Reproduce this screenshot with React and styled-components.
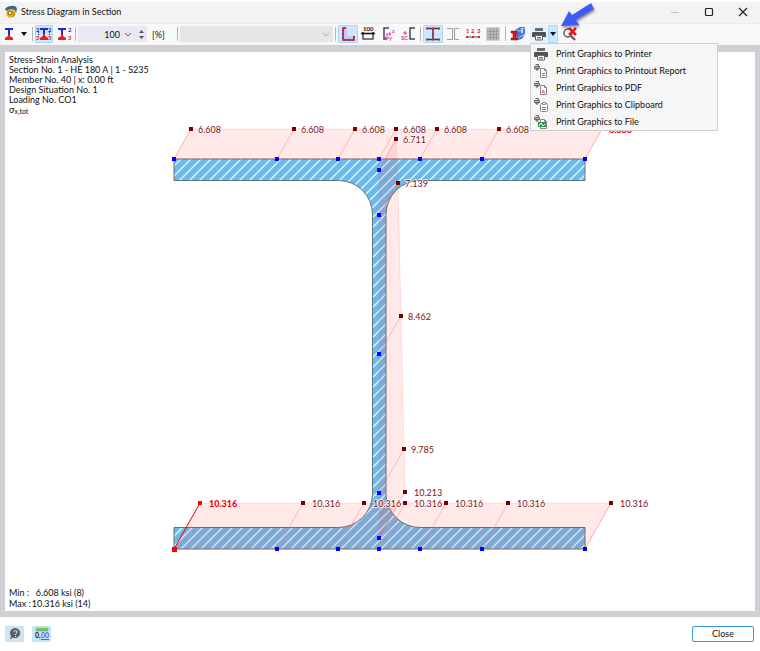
import React, { useState } from 'react';
import styled, { createGlobalStyle } from 'styled-components';

const TOP_X = [174, 277, 338, 379, 420, 482, 585];

const topPoints = TOP_X.map((x, i) => ({
  base: [x, 159],
  tip: [x + 17, 129],
  value: '6.608',
  extreme: i === TOP_X.length - 1,
}));
const bottomPoints = TOP_X.map((x, i) => ({
  base: [x, 549],
  tip: [x + 26, 503],
  value: '10.316',
  extreme: i === 0,
  governing: i === 0,
}));
const webPoints = [
  { base: [379, 170], tip: [396, 139], value: '6.711' },
  { base: [379, 215], tip: [398, 183], value: '7.139' },
  { base: [379, 354], tip: [401, 316], value: '8.462' },
  { base: [379, 493], tip: [404, 449], value: '9.785' },
  { base: [379, 538], tip: [405, 492], value: '10.213' },
];

const SECTION_PATH =
  'M174 159H585V180.500H420A34 34 0 0 0 386 214.500V493.500A34 34 0 0 0 420 527.500H585V549H174V527.500H338.500A34 34 0 0 0 372.500 493.500V214.500A34 34 0 0 0 338.500 180.500H174Z';

const polygon = (points) =>
  [...points.map((p) => p.base), ...[...points].reverse().map((p) => p.tip)]
    .map((p) => p.join(','))
    .join(' ');

function Marker({ at, color, size = 4 }) {
  return (
    <rect
      x={at[0] - size / 2}
      y={at[1] - size / 2}
      width={size}
      height={size}
      fill={color}
      shapeRendering="crispEdges"
    />
  );
}

function StressDiagram() {
  const sets = [topPoints, webPoints, bottomPoints];
  const all = sets.flat();

  return (
    <Diagram viewBox="5 52 750 559" role="img" aria-label="Stress diagram of section HE 180 A">
      <defs>
        <pattern id="hatch" width="10" height="10" patternUnits="userSpaceOnUse">
          <path d="M-1 11L11 -1M-1 1L1 -1M9 11L11 9" stroke="#e6f3fc" strokeWidth="1.4" />
        </pattern>
      </defs>
      <path d={SECTION_PATH} fill="#6abbec" />
      <path d={SECTION_PATH} fill="url(#hatch)" stroke="#66727b" />
      {sets.map((points) => (
        <polygon
          key={points[0].value}
          points={polygon(points)}
          fill="#ff2828"
          fillOpacity="0.1"
          stroke="#ff5050"
          strokeOpacity="0.15"
        />
      ))}
      {all.map((p) => (
        <line
          key={p.base.join()}
          x1={p.base[0]}
          y1={p.base[1]}
          x2={p.tip[0]}
          y2={p.tip[1]}
          stroke={p.governing ? '#ff0000' : '#ff6e6e'}
          strokeOpacity={p.governing ? 1 : 0.4}
        />
      ))}
      {all.map((p) => (
        <g key={p.base.join()}>
          <Marker at={p.base} color={p.governing ? '#ff0000' : '#0000ff'} size={p.governing ? 5 : 4} />
          <Marker at={p.tip} color={p.governing ? '#ff0000' : '#7a0000'} />
          <Value
            x={p.tip[0] + (p.value.length > 5 ? 9 : 7)}
            y={p.tip[1] + 4}
            $extreme={p.extreme}
          >
            {p.value}
          </Value>
        </g>
      ))}
    </Diagram>
  );
}

/* ---- icons ---- */

const AppIcon = () => (
  <svg width="14" height="14" viewBox="0 0 14 14">
    <path d="M3 5L8 3L12 6L10 12L5 13L2 10Z" fill="#f0b92b" />
    <path d="M1 4Q3 1 7 1Q12 0 13 4L12 8L11 5Q9 4 6 4L2 6Z" fill="#3f6680" />
    <circle cx="6" cy="8" r="2" fill="#fff0a8" stroke="#74571a" />
    <path d="M9 7L11 9L8 12" fill="none" stroke="#9a6c11" />
  </svg>
);

const StressIcon = () => (
  <svg width="12" height="14" viewBox="0 0 12 14">
    <path d="M2 1H10V3H7V8H5V3H2Z" fill="#1c2bd8" />
    <path d="M5 8H7V9L10 11V13H2V11L5 9Z" fill="#ee1c25" />
  </svg>
);

const StressValuesIcon = ({ both }) => (
  <svg width="18" height="16" viewBox="0 0 18 16">
    <path d={both ? 'M5 2H13V4H10V8H8V4H5Z' : 'M3 2H11V4H8V8H6V4H3Z'} fill="#1c2bd8" />
    <path
      d={both ? 'M8 8H10V10L13 12V14H5V12L8 10Z' : 'M6 8H8V10L11 12V14H3V12L6 10Z'}
      fill="#ee1c25"
    />
    {both && <path d="M3.500 6V9M14.500 6V9" stroke="#1c2bd8" strokeDasharray="1 1" />}
    {both && <IconText x="1" y="6" fill="#1c2bd8">2</IconText>}
    {both && <IconText x="1" y="14" fill="#ee1c25">3</IconText>}
    <IconText x="13" y="6" fill="#1c2bd8">2</IconText>
    <IconText x="13" y="14" fill="#ee1c25">3</IconText>
  </svg>
);

const CaretIcon = () => (
  <svg width="6" height="4" viewBox="0 0 6 4">
    <path d="M0 0H6L3 4Z" fill="#111" />
  </svg>
);

const ChevronIcon = ({ color = '#666' }) => (
  <svg width="8" height="5" viewBox="0 0 8 5">
    <path d="M1 1L4 4L7 1" fill="none" stroke={color} />
  </svg>
);

const PartIcon = () => (
  <svg width="16" height="16" viewBox="0 0 16 16">
    <path d="M3 2V14H14V10H8Q7 10 7 8V2Z" fill="#c6c5f5" />
    <path d="M6 2H3V14H14V11" fill="none" stroke="#3a4668" strokeWidth="1.500" />
    <path d="M6 2H3V14H14V10" fill="none" stroke="#f0141e" strokeWidth="2" strokeDasharray="2 2" />
  </svg>
);

const DimensionIcon = () => (
  <svg width="16" height="16" viewBox="0 0 16 16">
    <IconText x="3" y="5" fill="#111">100</IconText>
    <path d="M1 7.500H15M3 6V9M13 6V9" stroke="#111" strokeWidth="1.500" />
    <path d="M3 9V13H13V9" fill="none" stroke="#47546b" strokeWidth="1.500" />
  </svg>
);

const AxesIcon = () => (
  <svg width="16" height="16" viewBox="0 0 16 16">
    <path d="M9 2H4V13H7" fill="none" stroke="#3b4668" strokeWidth="1.500" />
    <path d="M6 8H11M7 8V12M10 6V10M5 11L7 13L9 11" fill="none" stroke="#e0409b" />
    <IconText x="12" y="7" fill="#e0409b">z</IconText>
    <IconText x="9" y="14" fill="#e0409b">y</IconText>
  </svg>
);

const ShearCenterIcon = () => (
  <svg width="16" height="16" viewBox="0 0 16 16">
    <path d="M15 2H10V13H15" fill="none" stroke="#3b4668" strokeWidth="1.500" />
    <path d="M5 5V9M3 7H7" stroke="#d4408c" />
    <IconText x="1" y="14" fill="#d4408c">SC</IconText>
  </svg>
);

const SectionIcon = ({ dots }) => (
  <svg width="16" height="16" viewBox="0 0 16 16">
    {dots ? (
      <path d="M2 2.500H14M8 2V13M2 13.500H14" stroke="#303b55" strokeWidth="1.500" />
    ) : (
      <path d="M2 2.500H7.500V13.500H2M14 2.500H9.500V13.500H14" fill="none" stroke="#9a9da2" />
    )}
    {dots && (
      <path
        d="M1 2.500H3M7 2.500H9M13 2.500H15M7 8H9M1 13.500H3M7 13.500H9M13 13.500H15"
        stroke="#f0141e"
        strokeWidth="2"
      />
    )}
  </svg>
);

const NumberingIcon = () => (
  <svg width="16" height="16" viewBox="0 0 16 16">
    <IconText x="1" y="7" fill="#e01a24">1</IconText>
    <IconText x="6" y="7" fill="#e01a24">2</IconText>
    <IconText x="12" y="7" fill="#e01a24">3</IconText>
    <path d="M2 11H14" stroke="#47546b" />
    <path d="M1 11H3M7 11H9M13 11H15" stroke="#e01a24" strokeWidth="2" />
  </svg>
);

const GridIcon = () => (
  <svg width="14" height="14" viewBox="0 0 14 14">
    <rect x="1" y="1" width="12" height="12" fill="#bdbdbd" />
    <path d="M1 4.500H13M1 7.500H13M1 10.500H13M4.500 1V13M7.500 1V13M10.500 1V13" stroke="#9a9a9a" />
    <rect x="1" y="1" width="12" height="12" fill="none" stroke="#b0b0b0" />
  </svg>
);

const SectionInfoIcon = () => (
  <svg width="16" height="16" viewBox="0 0 16 16">
    <path d="M5 4L10 1H15V8L12 13L7 14Z" fill="#4675d8" />
    <path d="M5 4L9 5L15 2M8 12L15 8" fill="none" stroke="#a9c3fa" />
    <path d="M12 2V3M12 4V7" stroke="#fff" strokeWidth="1.500" />
    <path d="M1 5H7V7H6V12H8V14H1V12H3V7H1Z" fill="#e3121c" stroke="#7c1016" strokeWidth="0.5" />
  </svg>
);

const PrinterIcon = () => (
  <svg width="14" height="14" viewBox="0 0 14 14">
    <path d="M3 1H11V4H3Z" fill="#6a6a6a" />
    <path d="M1 5H13Q14 5 14 6V10H11V9H3V10H0V6Q0 5 1 5Z" fill="#525252" />
    <path d="M3.500 8.500H10.500V13H3.500Z" fill="#fff" stroke="#6a6a6a" />
    <path d="M5 10.500H9M5 12H9" stroke="#777" />
  </svg>
);

const PrintTargetIcon = ({ target }) => (
  <svg width="14" height="14" viewBox="0 0 14 14">
    <path d="M1.500 0.500H4.500V2M0.500 2.500H5.500V4.500H0.500ZM2 4.500H4V6H2Z" fill="#bbb" stroke="#666" />
    {target !== 'clipboard' && (
      <path d="M6.500 4.500H10.500L12.500 6.500V13.500H6.500ZM10.500 4.500V6.500H12.500" fill="#fff" stroke="#888" />
    )}
    {target === 'report' && <path d="M8 9.500H11M8 11.500H11" stroke="#777" />}
    {target === 'pdf' && <path d="M8 12L9 9L11 12L8 11" fill="none" stroke="#e86a6a" />}
    {target === 'clipboard' && (
      <>
        <rect x="6.5" y="5.5" width="7" height="8" rx="1" fill="#fff" stroke="#888" />
        <path d="M8.500 6.500V4.500H11.500V6.500Z" fill="#fff" stroke="#888" />
        <path d="M8 9.500H12M8 11.500H12" stroke="#777" />
      </>
    )}
    {target === 'file' && (
      <>
        <rect x="4" y="7" width="8" height="5" fill="#2f9a57" />
        <path d="M5 11L7 8L9 11L11 9" fill="none" stroke="#fff" />
      </>
    )}
  </svg>
);

const ClearZoomIcon = () => (
  <svg width="14" height="14" viewBox="0 0 14 14">
    <circle cx="5" cy="6" r="4" fill="#fff" stroke="#555" strokeWidth="1.500" />
    <path d="M8 9L12 13" stroke="#555" strokeWidth="2" />
    <path d="M6 1L13 8M13 1L6 8" stroke="#ec1620" strokeWidth="2.500" />
  </svg>
);

const HelpIcon = () => (
  <svg width="12" height="12" viewBox="0 0 12 12">
    <path d="M6 0A5 5 0 1 1 4 9.500L1 11.500L2 8A5 5 0 0 1 6 0Z" fill="#5c6166" />
    <path d="M5 4Q5 2.500 6.500 2.500T8 4T6.500 6V7M6.500 8V9" fill="none" stroke="#dcebf7" />
  </svg>
);

const DecimalsIcon = () => (
  <svg width="16" height="14" viewBox="0 0 16 14">
    <path d="M2 1H14V4H2Z" fill="#83ce74" stroke="#62b553" strokeWidth="0.5" />
    <path d="M4 2V4M6 2V4M8 2V4M10 2V4M12 2V4" stroke="#4a9c3c" strokeWidth="0.5" />
    <DecimalText x="1" y="11" fill="#111">0,</DecimalText>
    <DecimalText x="7" y="11" fill="#3d6bea">00</DecimalText>
    <path d="M7 12.500H15" stroke="#3d6bea" />
  </svg>
);

const PRINT_ACTIONS = [
  { label: 'Print Graphics to Printer', icon: <PrinterIcon /> },
  { label: 'Print Graphics to Printout Report', icon: <PrintTargetIcon target="report" /> },
  { label: 'Print Graphics to PDF', icon: <PrintTargetIcon target="pdf" /> },
  { label: 'Print Graphics to Clipboard', icon: <PrintTargetIcon target="clipboard" /> },
  { label: 'Print Graphics to File', icon: <PrintTargetIcon target="file" /> },
];

export default function App() {
  const [scale, setScale] = useState(100);
  const [menuOpen, setMenuOpen] = useState(true);

  return (
    <Dialog>
      <GlobalStyle />
      <TitleBar>
        <AppIcon />
        <Title>Stress Diagram in Section</Title>
        <WindowButton aria-label="Minimize" disabled>
          <svg width="10" height="10"><path d="M1 5.500H9" stroke="#c4c4c4" /></svg>
        </WindowButton>
        <WindowButton aria-label="Maximize">
          <svg width="10" height="10">
            <rect x="1.5" y="1.5" width="7" height="7" rx="1" fill="none" stroke="#222" strokeWidth="1.2" />
          </svg>
        </WindowButton>
        <WindowButton aria-label="Close window">
          <svg width="10" height="10"><path d="M1 1L9 9M9 1L1 9" stroke="#222" strokeWidth="1.2" /></svg>
        </WindowButton>
      </TitleBar>

      <Toolbar>
        <ToolButton aria-label="Stresses" $width={18}><StressIcon /></ToolButton>
        <ToolButton aria-label="Select stress" $width={12}><CaretIcon /></ToolButton>
        <Separator />
        <Group>
          <ToolButton aria-label="Values at all points" $width={18} $active><StressValuesIcon both /></ToolButton>
          <ToolButton aria-label="Extreme values" $width={18}><StressValuesIcon /></ToolButton>
        </Group>
        <Separator />
        <SpinBox>
          <SpinInput
            aria-label="Scale in percent"
            value={scale}
            onChange={(e) => setScale(Number(e.target.value) || 0)}
          />
          <SpinChevron aria-label="Scale presets"><ChevronIcon /></SpinChevron>
          <SpinSteps>
            <StepButton aria-label="Increase" onClick={() => setScale(scale + 1)}>
              <svg width="5" height="3"><path d="M0 3H5L2.500 0Z" fill="#555" /></svg>
            </StepButton>
            <StepButton aria-label="Decrease" onClick={() => setScale(scale - 1)}>
              <svg width="5" height="3"><path d="M0 0H5L2.500 3Z" fill="#555" /></svg>
            </StepButton>
          </SpinSteps>
        </SpinBox>
        <Unit>[%]</Unit>
        <Separator />
        <SelectBox>
          <Select aria-label="Load case" disabled />
          <ChevronIcon color="#b0b0b0" />
        </SelectBox>
        <Separator />
        <ToolButton aria-label="Section part" $active><PartIcon /></ToolButton>
        <ToolButton aria-label="Dimensions"><DimensionIcon /></ToolButton>
        <ToolButton aria-label="Principal axes"><AxesIcon /></ToolButton>
        <ToolButton aria-label="Shear center"><ShearCenterIcon /></ToolButton>
        <Separator />
        <ToolButton aria-label="Stress points" $active><SectionIcon dots /></ToolButton>
        <ToolButton aria-label="Section outline"><SectionIcon /></ToolButton>
        <ToolButton aria-label="Numbering"><NumberingIcon /></ToolButton>
        <ToolButton aria-label="Grid"><GridIcon /></ToolButton>
        <Separator />
        <Group>
          <ToolButton aria-label="Section info"><SectionInfoIcon /></ToolButton>
          <PrintButton>
            <ToolButton aria-label="Print" $width={18} $hover><PrinterIcon /></ToolButton>
            <ToolButton
              aria-label="Print options"
              aria-expanded={menuOpen}
              $width={10}
              $active
              onClick={() => setMenuOpen(!menuOpen)}
            >
              <CaretIcon />
            </ToolButton>
            {menuOpen && (
              <Menu role="menu">
                {PRINT_ACTIONS.map((action) => (
                  <MenuItem key={action.label} role="menuitem">
                    {action.icon}
                    {action.label}
                  </MenuItem>
                ))}
              </Menu>
            )}
            <Pointer width="38" height="28" viewBox="0 0 38 28">
              <path d="M1 23L9 8L12 12L31 0L34 6L16 17L19 22Z" fill="#3f5bf6" />
            </Pointer>
          </PrintButton>
          <ToolButton aria-label="Reset zoom"><ClearZoomIcon /></ToolButton>
        </Group>
      </Toolbar>

      <Frame>
        <Canvas>
          <StressDiagram />
          <Info>
            <p>Stress-Strain Analysis</p>
            <p>Section No. 1 - HE 180 A | 1 - S235</p>
            <p>Member No. 40 | x: 0.00 ft</p>
            <p>Design Situation No. 1</p>
            <p>Loading No. CO1</p>
            <p>σ<Sub>x,tot</Sub></p>
          </Info>
          <Extremes>
            <dt>Min :</dt>
            <dd>6.608 ksi (8)</dd>
            <dt>Max :</dt>
            <dd>10.316 ksi (14)</dd>
          </Extremes>
        </Canvas>
      </Frame>

      <Footer>
        <FooterTool aria-label="Help"><HelpIcon /></FooterTool>
        <FooterTool aria-label="Units and decimal places"><DecimalsIcon /></FooterTool>
        <CloseButton>Close</CloseButton>
      </Footer>
    </Dialog>
  );
}

const GlobalStyle = createGlobalStyle`
  * {
    box-sizing: border-box;
  }

  body {
    margin: 0;
    background: #fff;
    color: #111;
    font-family: Lato, "Open Sans", sans-serif;
    font-size: 9px;
  }

  button, input, select {
    font: inherit;
    color: inherit;
    border: 0;
    padding: 0;
    background: none;
  }

  svg {
    display: block;
    flex-shrink: 0;
  }

  p, dl, dd {
    margin: 0;
  }
`;

const Dialog = styled.main`
  display: flex;
  flex-direction: column;
  min-height: 100vh;
  padding-top: 2px;
`;

const TitleBar = styled.header`
  display: flex;
  align-items: center;
  height: 21px;
  padding: 0 0 2px 4px;
  background: #f3f3f3;
`;

const Title = styled.h1`
  flex: 1;
  margin: 0 0 0 3px;
  font-size: 9px;
  font-weight: 400;
`;

const WindowButton = styled.button`
  display: grid;
  place-items: center;
  width: 34px;
  height: 19px;
`;

const Toolbar = styled.div`
  display: flex;
  align-items: center;
  height: 22px;
  padding-bottom: 1px;
  background: #f8f8f8;
  border-top: 1px solid #ebebeb;
`;

const Group = styled.div`
  display: flex;
  gap: 2px;
`;

const ToolButton = styled.button`
  display: grid;
  place-items: center;
  flex-shrink: 0;
  width: ${(p) => p.$width || 20}px;
  height: 18px;
  border-radius: 2px;
  background: ${(p) => (p.$active ? '#cce8ff' : p.$hover ? '#e5f3ff' : 'transparent')};
  box-shadow: ${(p) => (p.$active ? 'inset 0 0 0 1px #a6d8fa' : 'none')};
`;

const Separator = styled.span`
  flex-shrink: 0;
  width: 1px;
  height: 14px;
  margin: 0 2px;
  background: #b4b4b4;
`;

const SpinBox = styled.div`
  display: flex;
  align-items: center;
  width: 69px;
  height: 16px;
  background: #e9e9f3;
`;

const SpinInput = styled.input`
  flex: 1;
  min-width: 0;
  text-align: right;
`;

const SpinChevron = styled.button`
  display: grid;
  place-items: center;
  width: 16px;
`;

const SpinSteps = styled.div`
  display: grid;
  gap: 3px;
  padding: 0 3px;
`;

const StepButton = styled.button`
  height: 3px;
`;

const Unit = styled.span`
  width: 28px;
  padding-left: 5px;
`;

const SelectBox = styled.div`
  display: grid;
  align-items: center;
  flex: 0 1 153px;
  height: 16px;
  background: #e5e5e5;

  > * {
    grid-area: 1 / 1;
  }

  > svg {
    justify-self: end;
    margin-right: 3px;
  }
`;

const Select = styled.select`
  width: 100%;
  height: 16px;
  appearance: none;
`;

const PrintButton = styled.div`
  position: relative;
  display: flex;
`;

const Menu = styled.div`
  position: absolute;
  z-index: 2;
  top: 18px;
  left: 0;
  width: 188px;
  padding-top: 1px;
  background: #f6f6f6;
  border: 1px solid #cfcfcf;
`;

const MenuItem = styled.button`
  display: flex;
  align-items: center;
  gap: 8px;
  width: 100%;
  height: 17px;
  padding-left: 3px;
  text-align: left;
  white-space: nowrap;

  &:hover {
    background: #dcecf9;
  }
`;

const Pointer = styled.svg`
  position: absolute;
  z-index: 3;
  top: -22px;
  left: 30px;
  pointer-events: none;
  filter: drop-shadow(1px 2px 1px rgba(0, 0, 0, 0.4));
`;

const Frame = styled.section`
  flex: 1;
  display: flex;
  padding: 7px 5px 6px;
  background: #d0cfd4;
`;

const Canvas = styled.div`
  flex: 1;
  display: grid;
  background: #fff;

  > * {
    grid-area: 1 / 1;
  }
`;

const Diagram = styled.svg`
  width: 100%;
  align-self: center;
`;

const Value = styled.text`
  fill: ${(p) => (p.$extreme ? '#ff0000' : '#7d1219')};
  font-size: 9px;
  font-weight: ${(p) => (p.$extreme ? 900 : 400)};
  stroke: #fff;
  stroke-opacity: 0.7;
  stroke-width: 2px;
  paint-order: stroke;
`;

const IconText = styled.text`
  font-size: 6px;
  font-weight: 700;
`;

const DecimalText = styled.text`
  font-size: 7px;
  font-weight: 700;
`;

const Info = styled.div`
  align-self: start;
  padding: 3px 4px;
  line-height: 10px;
`;

const Sub = styled.sub`
  font-size: 7px;
  line-height: 0;
  vertical-align: -1px;
`;

const Extremes = styled.dl`
  align-self: end;
  justify-self: start;
  display: grid;
  grid-template-columns: auto auto;
  column-gap: 1px;
  padding: 0 4px 2px;
  line-height: 11px;

  dd:first-of-type {
    padding-left: 4px;
  }
`;

const Footer = styled.footer`
  display: flex;
  align-items: center;
  gap: 8px;
  height: 34px;
  padding: 0 6px 1px 5px;
`;

const FooterTool = styled.button`
  display: grid;
  place-items: center;
  width: 19px;
  height: 16px;
  background: #cce4f7;
`;

const CloseButton = styled.button`
  width: 62px;
  height: 16px;
  margin-left: auto;
  background: #fdfdfd;
  border: 1px solid #3c96e0;
  border-radius: 2px;
`;
